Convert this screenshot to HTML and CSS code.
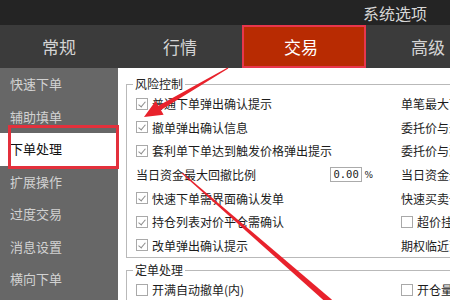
FILE: index.html
```html
<!DOCTYPE html>
<html lang="zh-CN">
<head>
    <meta charset="UTF-8">
    <title>系统选项</title>
    <link rel="stylesheet" href="styles.css">
</head>
<body>
    <div class="window">
        <div class="titlebar"><span class="title">系统选项</span></div>

        <nav class="tabs">
            <div class="tab first">常规</div>
            <div class="tab">行情</div>
            <div class="tab active">交易</div>
            <div class="tab">高级</div>
        </nav>

        <div class="content">
            <ul class="side">
                <li>快速下单</li>
                <li>辅助填单</li>
                <li class="current">下单处理</li>
                <li>扩展操作</li>
                <li>过度交易</li>
                <li>消息设置</li>
                <li>横向下单</li>
            </ul>

            <div class="panel">
                <!-- 风险控制 -->
                <div class="group">
                    <div class="legend">风险控制</div>
                    <div class="cols">
                        <div class="col left">
                            <div class="row"><span class="box checked"></span>普通下单弹出确认提示</div>
                            <div class="row"><span class="box checked"></span>撤单弹出确认信息</div>
                            <div class="row"><span class="box checked"></span>套利单下单达到触发价格弹出提示</div>
                            <div class="row rate-row">
                                <span>当日资金最大回撤比例</span>
                                <span class="rate">0.00</span>
                                <span class="pct">%</span>
                            </div>
                            <div class="row"><span class="box checked"></span>快速下单需界面确认发单</div>
                            <div class="row"><span class="box checked"></span>持仓列表对价平仓需确认</div>
                            <div class="row"><span class="box checked"></span>改单弹出确认提示</div>
                        </div>
                        <div class="col right">
                            <div class="row">单笔最大下单量提示</div>
                            <div class="row">委托价与最新价偏离提示</div>
                            <div class="row">委托价与涨跌停价提示</div>
                            <div class="row">当日资金最大亏损</div>
                            <div class="row">快速买卖一键下单</div>
                            <div class="row"><span class="box"></span>超价挂单提示</div>
                            <div class="row">期权临近到期提示</div>
                        </div>
                    </div>
                </div>

                <!-- 定单处理 -->
                <div class="group second">
                    <div class="legend">定单处理</div>
                    <div class="cols">
                        <div class="col left">
                            <div class="row"><span class="box"></span>开满自动撤单(内)</div>
                        </div>
                        <div class="col right">
                            <div class="row"><span class="box"></span>开仓量超限提示</div>
                        </div>
                    </div>
                </div>
            </div>
        </div>

        <!-- 标注 -->
        <div class="mark-side"></div>
        <svg class="arrows" width="450" height="300" viewBox="0 0 450 300">
            <polygon fill="#e8222c" points="227.75,67.57 158.3,105.7 155.6,101.0 144,117 163.6,114.8 160.9,110.1 228.25,68.43"/>
            <polygon fill="#e8222c" points="182.33,172.62 331.97,299.74 328.03,304.26 181.67,173.38"/>
        </svg>
    </div>
</body>
</html>
```

FILE: styles.css
```css
/* Global */
* {
    margin: 0;
    padding: 0;
    box-sizing: border-box;
}

body {
    font-family: "Noto Sans CJK SC", "Noto Sans", sans-serif;
    background-color: #fff;
}

.window {
    position: relative;
    width: 450px;
    height: 300px;
    overflow: hidden;
}

/* Title bar */
.titlebar {
    height: 25px;
    background-color: #242424;
    display: flex;
    justify-content: flex-end;
    align-items: center;
    padding-right: 23px;
}

.title {
    font-size: 16px;
    color: #d6d6d6;
}

/* Tabs */
.tabs {
    display: flex;
    height: 43px;
    background-color: #3b3b3b;
}

.tab {
    flex: 0 0 124px;
    display: flex;
    align-items: center;
    justify-content: center;
    font-size: 17px;
    color: #d4d4d4;
}

.tab.first {
    flex-basis: 118px;
}

.tab.active {
    background-color: #b82b02;
    color: #fff;
    border: 2px solid #e8364c;
    padding-right: 6px;
}

/* Body */
.content {
    display: flex;
    height: 232px;
}

.side {
    flex: 0 0 118px;
    background-color: #676767;
    list-style: none;
}

.side li {
    height: 32.5px;
    line-height: 32.5px;
    padding-left: 10px;
    font-size: 13px;
    color: #d2d2d2;
}

.side li.current {
    background-color: #fff;
    color: #111;
}

.panel {
    flex: 1;
    background-color: #fff;
    padding: 16px 0 0 8px;
}

/* Group boxes */
.group {
    width: 420px;
    border: 1px solid #b9b9b9;
    border-right: none;
}

.group.second {
    margin-top: 12px;
}

.legend {
    width: fit-content;
    margin: -9px 0 0 6px;
    padding: 0 2px;
    height: 16px;
    line-height: 16px;
    font-size: 12px;
    color: #222;
    background-color: #fff;
}

.cols {
    display: flex;
}

.col.left {
    flex: 0 0 274px;
    padding-left: 9px;
}

.col.right {
    flex: 1;
}

.row {
    height: 23.6px;
    display: flex;
    align-items: center;
    font-size: 12px;
    color: #1c1c1c;
    white-space: nowrap;
}

/* Checkbox */
.box {
    position: relative;
    flex: 0 0 12px;
    width: 12px;
    height: 12px;
    border: 1px solid #a9a9a9;
    margin-right: 4px;
    background-color: #fff;
}

.box.checked::after {
    content: "";
    position: absolute;
    left: 3px;
    top: 1px;
    width: 3px;
    height: 6px;
    border-right: 1px solid #8c8c8c;
    border-bottom: 1px solid #8c8c8c;
    transform: rotate(40deg);
}

/* 回撤比例 */
.rate-row {
    padding-right: 28px;
}

.rate {
    margin-left: auto;
    width: 32px;
    height: 15px;
    line-height: 13px;
    border: 1px solid #ababab;
    padding-left: 2px;
    font-family: "DejaVu Sans Mono", monospace;
    font-size: 10.5px;
    color: #222;
}

.pct {
    margin-left: 2px;
    font-family: "DejaVu Sans", sans-serif;
    font-size: 9px;
}

/* Annotations */
.mark-side {
    position: absolute;
    left: 8px;
    top: 125px;
    width: 111px;
    height: 44px;
    border: 3px solid #e3303c;
}

.arrows {
    position: absolute;
    left: 0;
    top: 0;
    pointer-events: none;
}
```
